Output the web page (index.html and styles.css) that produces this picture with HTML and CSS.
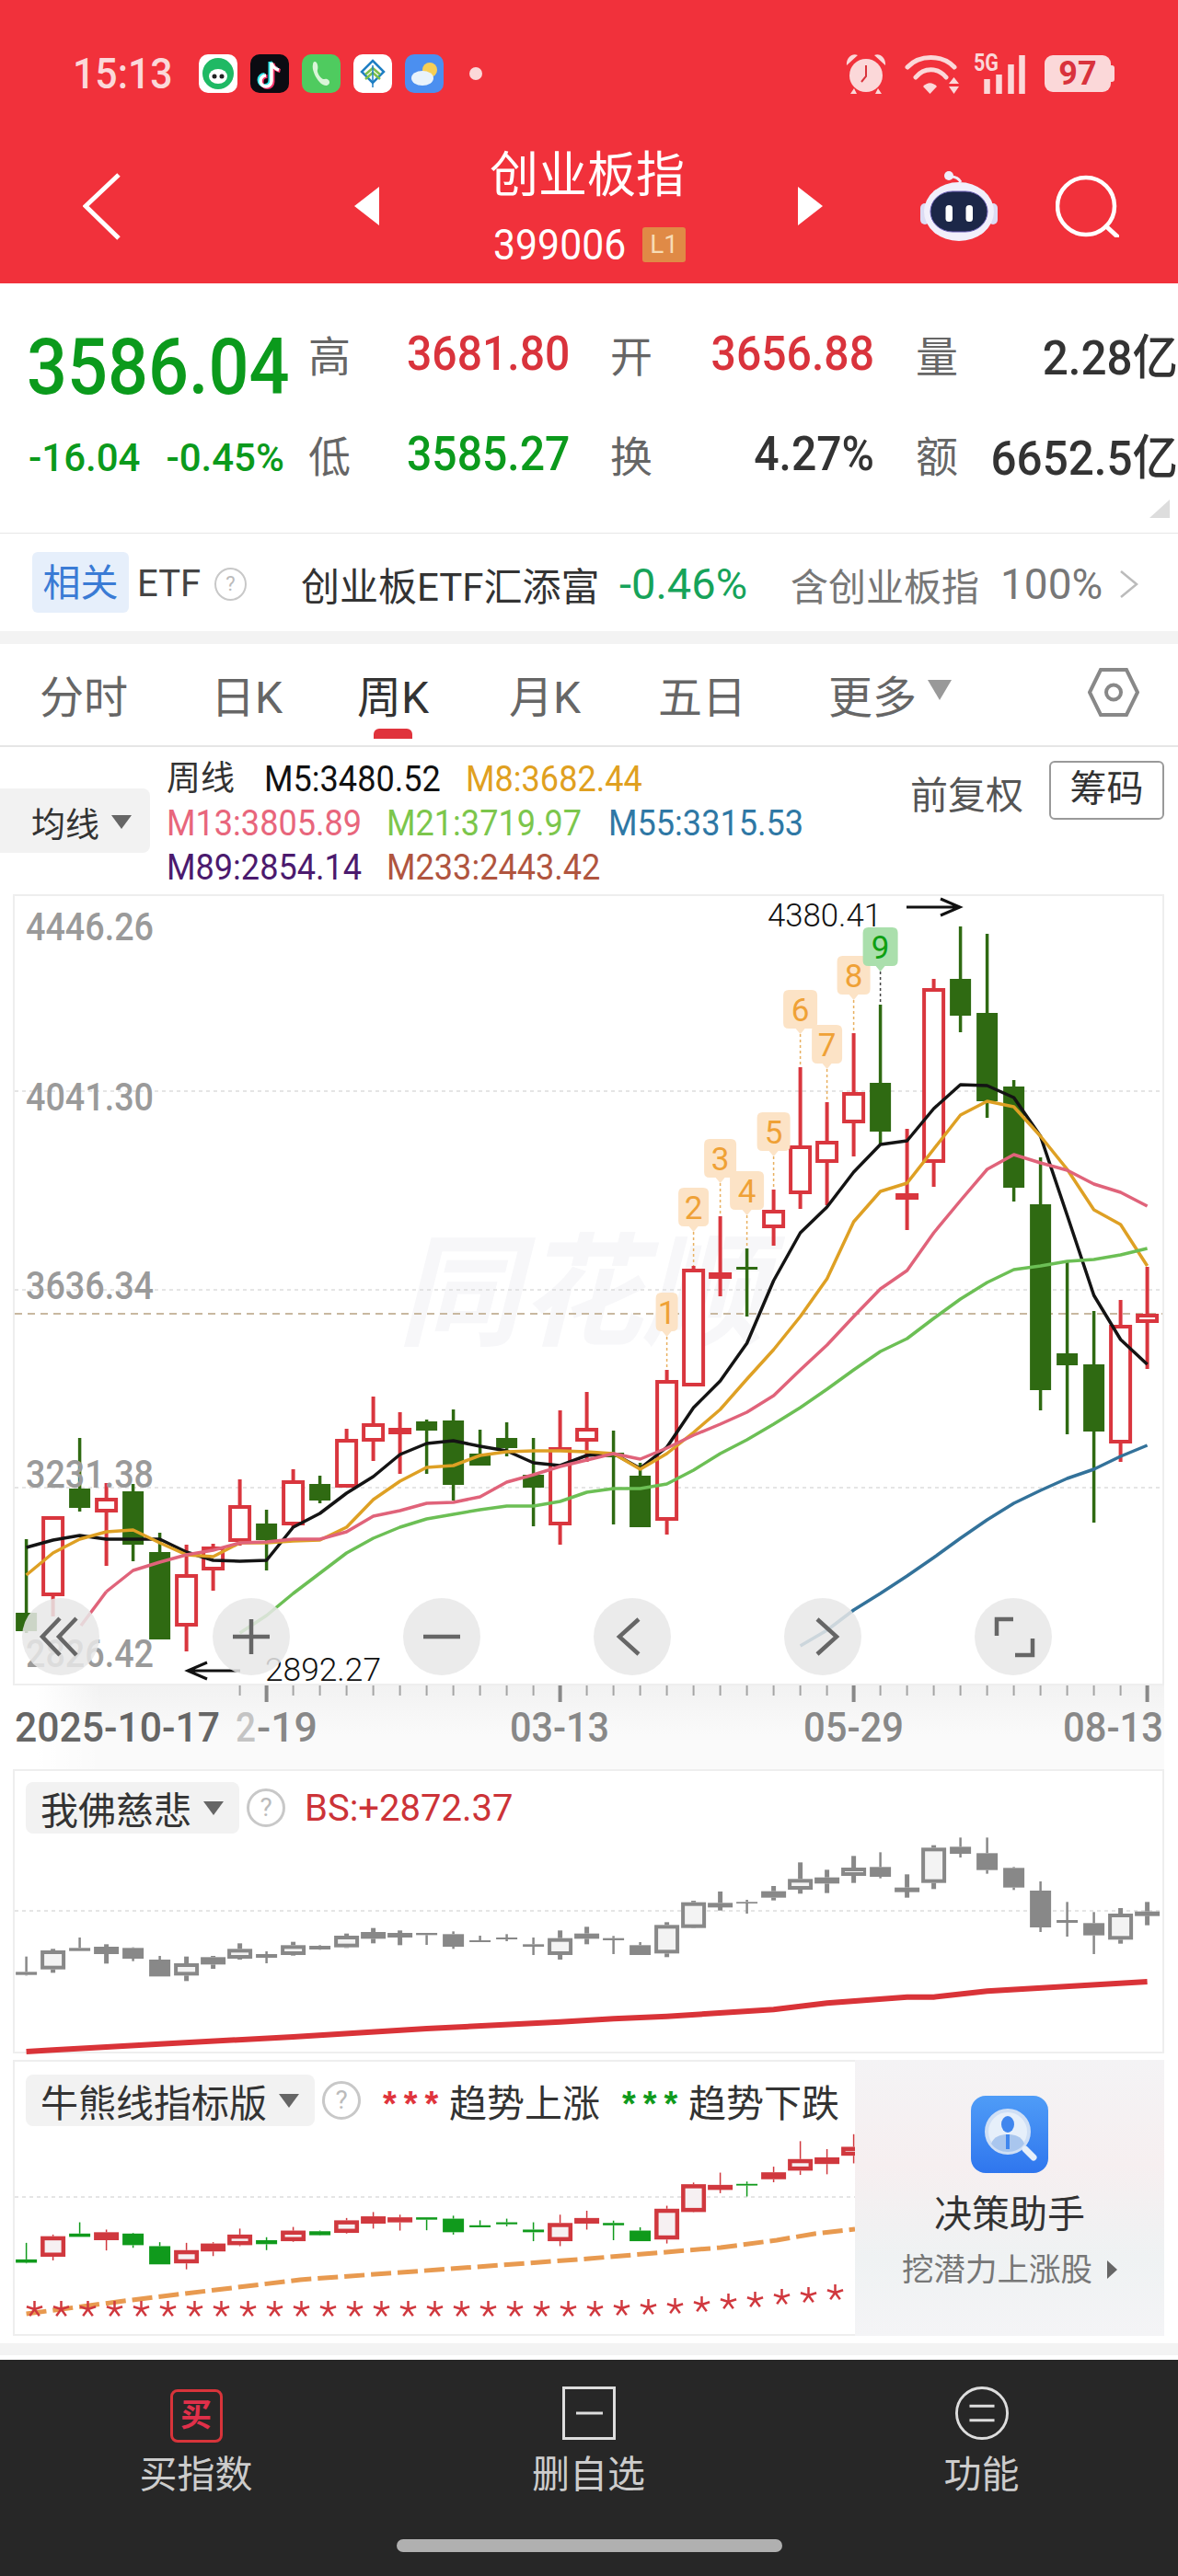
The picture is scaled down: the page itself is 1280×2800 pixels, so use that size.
FILE: index.html
```html
<!DOCTYPE html>
<html lang="zh-CN">
<head>
    <meta charset="UTF-8">
    <meta name="viewport" content="width=device-width, initial-scale=1.0">
    <title>创业板指</title>
    <link rel="stylesheet" href="styles.css">
</head>
<body>

<header class="header">
    <div class="statusbar">
        <span class="time">15:13</span>
        <div class="app-icons">
            <svg class="app" viewBox="0 0 42 42"><rect width="42" height="42" rx="10" fill="#fff"/><circle cx="21" cy="21" r="17" fill="#1fb964"/><ellipse cx="21" cy="24" rx="10" ry="8" fill="#fff"/><circle cx="17" cy="24" r="2.5" fill="#222"/><circle cx="25" cy="24" r="2.5" fill="#222"/></svg>
            <svg class="app" viewBox="0 0 42 42"><rect width="42" height="42" rx="10" fill="#0b0b12"/><path d="M23 9v20a6 6 0 1 1-6-6M23 9c1 5 4 7 8 8" fill="none" stroke="#2fe6ea" stroke-width="4" transform="translate(-1.5 -1)"/><path d="M23 9v20a6 6 0 1 1-6-6M23 9c1 5 4 7 8 8" fill="none" stroke="#f5316a" stroke-width="4" transform="translate(1.5 1)"/><path d="M23 9v20a6 6 0 1 1-6-6M23 9c1 5 4 7 8 8" fill="none" stroke="#fff" stroke-width="3.5"/></svg>
            <svg class="app" viewBox="0 0 42 42"><rect width="42" height="42" rx="10" fill="#4fcb5f"/><path d="M14 8c3 0 4 6 3 9-1 2 3 9 6 10 2 0 4-1 6 1 2 2 1 5-2 6-8 1-17-16-15-23 0-2 1-3 2-3z" fill="#d9f5d8"/></svg>
            <svg class="app" viewBox="0 0 42 42"><rect width="42" height="42" rx="10" fill="#fff"/><path d="M21 7 33 19 21 31 9 19z" fill="none" stroke="#1f7fc4" stroke-width="2.5"/><path d="M13 22 21 15 29 22M13 27 21 20 29 27" fill="none" stroke="#7cc04a" stroke-width="2.5"/><path d="M21 12v24" stroke="#1f7fc4" stroke-width="1.5"/></svg>
            <svg class="app" viewBox="0 0 42 42"><rect width="42" height="42" rx="10" fill="#4b8ff0"/><circle cx="27" cy="17" r="8" fill="#f7cf56"/><ellipse cx="19" cy="26" rx="12" ry="8" fill="#e9f3fb"/></svg>
        </div>
        <span class="status-dot"></span>
        <div class="status-right">
            <svg class="ic-alarm" viewBox="0 0 44 44"><circle cx="22" cy="24" r="18" fill="#fbd8d9"/><path d="M1 13C0 5 7-1 13 2zM43 13C44 5 37-1 31 2z" fill="#fbd8d9"/><path d="M9 38 5 44h7M35 38l4 6h-7" fill="#fbd8d9"/><path d="M22 13v12l-5 6" fill="none" stroke="#d9333c" stroke-width="2"/></svg>
            <svg class="ic-wifi" viewBox="0 0 60 43"><path d="M3 14C16 0 41 0 54 14M12 25C21 14 36 14 45 25" fill="none" stroke="#fbd8d9" stroke-width="5" stroke-linecap="round"/><path d="M20 35c5-5 10-5 15 0l-7.500 8z" fill="#fbd8d9"/><path d="M48 32l5.500-7 5.500 7zM48 35l5.500 8 5.500-8z" fill="#fbd8d9"/></svg>
            <svg class="ic-signal" viewBox="0 0 56 43"><text class="five-g" x="0" y="18" textLength="27" lengthAdjust="spacingAndGlyphs">5G</text><path d="M14.500 27v16M27.500 22v21M40.500 11v32M52.500 1v42" stroke="#fbd8d9" stroke-width="6.500"/></svg>
            <span class="battery">97</span>
        </div>
    </div>
    <nav class="nav">
        <svg class="ic-back" viewBox="0 0 41 73"><path d="M39 2 3 36l36 35" fill="none" stroke="#fff" stroke-width="5"/></svg>
        <span class="tri-left"></span>
        <div class="title-block">
            <div class="title">创业板指</div>
            <div class="code"><span class="code-num">399006</span><span class="level">L1</span></div>
        </div>
        <span class="tri-right"></span>
        <svg class="ic-robot" viewBox="0 0 84 76"><path d="M33 6q8 0 11 6" fill="none" stroke="#f0eefb" stroke-width="3"/><circle cx="31" cy="5" r="5" fill="#f0eefb"/><rect x="0" y="35" width="10" height="23" rx="5" fill="#dcdcf4"/><rect x="74" y="35" width="10" height="23" rx="5" fill="#dcdcf4"/><ellipse cx="42" cy="44" rx="38" ry="32" fill="#f1effb"/><rect x="11" y="22" width="62" height="44" rx="24" fill="#1c2748" stroke="#6a5fb5" stroke-width="1"/><rect x="27.500" y="37" width="7.500" height="18" rx="3.500" fill="#fff"/><rect x="49.500" y="37" width="7.500" height="18" rx="3.500" fill="#fff"/></svg>
        <svg class="ic-search" viewBox="0 0 69 68"><circle cx="33" cy="34" r="31" fill="none" stroke="#fff" stroke-width="4.500"/><path d="M55 56l12 11" stroke="#fff" stroke-width="5" stroke-linecap="round"/></svg>
    </nav>
</header>

<section class="quote">
    <div class="quote-grid">
        <div class="price"><span class="price-num">3586.04</span></div>
        <div class="q-label">高</div>
        <div class="q-val red">3681.80</div>
        <div class="q-label">开</div>
        <div class="q-val red right mid">3656.88</div>
        <div class="q-label end">量</div>
        <div class="q-val dark right last">2.28亿</div>

        <div class="change"><span>-16.04</span><span>-0.45%</span></div>
        <div class="q-label">低</div>
        <div class="q-val green">3585.27</div>
        <div class="q-label">换</div>
        <div class="q-val dark right mid">4.27%</div>
        <div class="q-label end">额</div>
        <div class="q-val dark right last">6652.5亿</div>
    </div>
    <span class="corner"></span>
</section>

<section class="etf">
    <span class="etf-tag">相关</span>
    <span class="etf-name">ETF</span>
    <span class="help help-sm">?</span>
    <span class="etf-fund">创业板ETF汇添富</span>
    <span class="etf-chg">-0.46%</span>
    <span class="etf-hold">含创业板指</span>
    <span class="etf-pct">100%</span>
    <svg class="etf-arrow" viewBox="0 0 21 30"><path d="M2 1l17 14L2 29" fill="none" stroke="#bbb" stroke-width="2.5"/></svg>
</section>

<div class="band"></div>

<section class="tabs">
    <span class="tab">分时</span>
    <span class="tab">日K</span>
    <span class="tab active">周K</span>
    <span class="tab">月K</span>
    <span class="tab">五日</span>
    <span class="tab">更多<i class="tab-tri"></i></span>
    <svg class="ic-hex" viewBox="0 0 56 53"><path d="M14 2h28l12 24.500L42 51H14L2 26.500z" fill="none" stroke="#888" stroke-width="4"/><circle cx="28" cy="26.500" r="8" fill="none" stroke="#888" stroke-width="4"/></svg>
</section>

<section class="legend">
    <div class="ma-select">均线<i class="select-tri"></i></div>
    <div class="ma-lines">
        <div class="ma-row first"><span class="ma-title">周线</span><span class="c-m5">M5:3480.52</span><span class="c-m8">M8:3682.44</span></div>
        <div class="ma-row"><span class="c-m13">M13:3805.89</span><span class="c-m21">M21:3719.97</span><span class="c-m55">M55:3315.53</span></div>
        <div class="ma-row"><span class="c-m89">M89:2854.14</span><span class="c-m233">M233:2443.42</span></div>
    </div>
    <div class="adjust">前复权</div>
    <div class="chip-btn">筹码</div>
</section>

<section class="kline">
    <svg id="kline-chart" class="chart-svg" width="1247" height="856" viewBox="16 974 1247 856"></svg>
    <div class="chart-btns">
        <span class="round-btn"><svg viewBox="0 0 84 84"><path d="M41 22 22 42l19 20M59 22 40 42l19 20"/></svg></span>
        <span class="round-btn"><svg viewBox="0 0 84 84"><path d="M22 42h40M42 23v38"/></svg></span>
        <span class="round-btn"><svg viewBox="0 0 84 84"><path d="M22 42h40"/></svg></span>
        <span class="round-btn"><svg viewBox="0 0 84 84"><path d="M49 23 28 42l21 19"/></svg></span>
        <span class="round-btn"><svg viewBox="0 0 84 84"><path d="M36 23l21 19-21 19"/></svg></span>
        <span class="round-btn"><svg viewBox="0 0 84 84"><path d="M42 23H24v18M44 62h19V44"/></svg></span>
    </div>
</section>

<section class="axis">
    <svg id="axis-chart" class="axis-svg" width="1280" height="91" viewBox="0 1832 1280 91"></svg>
</section>

<section class="panel panel-bs">
    <svg id="bs-chart" class="chart-svg" width="1247" height="305" viewBox="16 1925 1247 305"></svg>
    <div class="panel-head">
        <div class="ind-select">我佛慈悲<i class="select-tri"></i></div>
        <span class="help">?</span>
        <span class="bs-val">BS:+2872.37</span>
    </div>
</section>

<section class="panel panel-bull">
    <div class="bull-main">
        <svg id="bull-chart" class="chart-svg" width="913" height="296" viewBox="16 2241 913 296"></svg>
        <div class="panel-head">
            <div class="ind-select">牛熊线指标版<i class="select-tri"></i></div>
            <span class="help">?</span>
            <span class="stars red-star">***</span><span class="trend">趋势上涨</span>
            <span class="stars green-star">***</span><span class="trend">趋势下跌</span>
        </div>
    </div>
    <aside class="helper">
        <svg class="helper-icon" viewBox="0 0 84 84">
            <defs><linearGradient id="helperBg" x1="0" y1="0" x2="0" y2="1"><stop offset="0" stop-color="#4f9cf7"/><stop offset="1" stop-color="#2f76ee"/></linearGradient></defs>
            <rect width="84" height="84" rx="16" fill="url(#helperBg)"/>
            <circle cx="40" cy="39" r="23" fill="#e6effa" stroke="#cfdff5" stroke-width="4"/>
            <path d="M22 52c3-8 11-10 18-10s15 2 18 10c-4 6-11 9-18 9s-14-3-18-9z" fill="#a9c6ee"/>
            <ellipse cx="40" cy="31" rx="7" ry="9" fill="#3f86ee"/>
            <path d="M38 42h4v16h-4z" fill="#3f86ee"/>
            <path d="M59 58l9 9" stroke="#e6effa" stroke-width="7" stroke-linecap="round"/>
        </svg>
        <div class="helper-title">决策助手</div>
        <div class="helper-sub">挖潜力上涨股<i class="helper-tri"></i></div>
    </aside>
</section>

<div class="foot-gap"></div>

<footer class="bottom">
    <div class="bottom-tabs">
        <div class="bottom-item">
            <span class="buy-icon">买</span>
            <span class="bottom-text">买指数</span>
        </div>
        <div class="bottom-item">
            <svg class="bottom-icon" viewBox="0 0 58 58"><rect x="1.500" y="1.500" width="55" height="55" fill="none" stroke="#ddd" stroke-width="3"/><path d="M15 29h29" stroke="#ddd" stroke-width="3"/></svg>
            <span class="bottom-text">删自选</span>
        </div>
        <div class="bottom-item">
            <svg class="bottom-icon" viewBox="0 0 60 60"><circle cx="30" cy="30" r="28.500" fill="none" stroke="#ddd" stroke-width="3"/><path d="M16 22h28M16 38h28" stroke="#ddd" stroke-width="3"/></svg>
            <span class="bottom-text">功能</span>
        </div>
    </div>
    <div class="home-bar"></div>
</footer>

<script src="chart.js"></script>
</body>
</html>
```

FILE: styles.css
```css
* {
    box-sizing: border-box;
}

body {
    margin: 0;
    width: 1280px;
    height: 2800px;
    overflow: hidden;
    background: #fff;
    color: #333;
    font-family: Roboto, "Noto Sans CJK SC", sans-serif;
}

/* red header */
.header {
    height: 308px;
    background-color: #f1313b;
}

.statusbar {
    display: flex;
    align-items: center;
    height: 160px;
    padding: 0 69px 0 79px;
}

.time {
    width: 107px;
    font-size: 46px;
    font-weight: 500;
    color: #fbd8d9;
    white-space: nowrap;
    transform: scaleX(0.93);
    transform-origin: left;
}

.app-icons {
    display: flex;
    gap: 14px;
    margin-left: 30px;
}

.app {
    width: 42px;
    height: 42px;
}

.status-dot {
    width: 14px;
    height: 14px;
    margin-left: 28px;
    border-radius: 50%;
    background: #fbd8d9;
}

.status-right {
    display: flex;
    align-items: center;
    margin-left: auto;
}

.ic-alarm {
    width: 44px;
    height: 44px;
}

.ic-wifi {
    width: 60px;
    height: 43px;
    margin-left: 20px;
}

.ic-signal {
    width: 56px;
    height: 43px;
    margin-left: 15px;
    overflow: visible;
}

.five-g {
    font-size: 25px;
    font-weight: 700;
    fill: #fbd8d9;
}

.battery {
    position: relative;
    width: 72px;
    height: 40px;
    margin: 0 4px 0 21px;
    border-radius: 9px;
    background: #fbd8d9;
    color: #d9333c;
    font-size: 36px;
    font-weight: 700;
    line-height: 40px;
    text-align: center;
}

.battery::after {
    content: "";
    position: absolute;
    left: 72px;
    top: 11px;
    width: 4px;
    height: 18px;
    border-radius: 0 3px 3px 0;
    background: #fbd8d9;
}

.nav {
    display: flex;
    align-items: center;
    height: 128px;
    padding-left: 90px;
    color: #fff;
}

.ic-back {
    width: 41px;
    height: 73px;
}

.tri-left, .tri-right {
    width: 0;
    height: 0;
    border-top: 21px solid transparent;
    border-bottom: 21px solid transparent;
}

.tri-left {
    margin-left: 254px;
    border-right: 27px solid #fff;
}

.tri-right {
    margin-left: 122px;
    border-left: 27px solid #fff;
}

.title-block {
    width: 213px;
    margin-left: 120px;
}

.title {
    font-size: 53px;
    line-height: 62px;
    white-space: nowrap;
}

.code {
    display: flex;
    align-items: center;
    gap: 7px;
    margin-top: 22px;
    height: 44px;
    padding-left: 4px;
    font-size: 46px;
}

.code-num {
    transform: scaleX(0.93);
    transform-origin: left;
}

.level {
    width: 47px;
    height: 38px;
    border-radius: 3px;
    background: #e08a46;
    color: #f7dcb5;
    font-size: 28px;
    line-height: 38px;
    text-align: center;
}

.ic-robot {
    width: 84px;
    height: 76px;
    margin-left: 106px;
}

.ic-search {
    width: 69px;
    height: 68px;
    margin-left: 63px;
}

/* price block */
.quote {
    position: relative;
    height: 272px;
    padding: 46px 0 0 31px;
    border-bottom: 1px solid #e6e6e6;
}

.quote-grid {
    display: grid;
    grid-template-columns: 304px 107px 221px 110px 174px 94px 235px;
    grid-auto-rows: 60px;
    row-gap: 49px;
    align-items: center;
}

.price {
    margin-top: 32px;
}

.price-num {
    display: inline-block;
    margin-left: -2px;
    font-size: 86px;
    font-weight: 500;
    line-height: 60px;
    color: #0b9a1c;
    transform: scaleX(0.9);
    transform-origin: left;
}

.change {
    display: flex;
    gap: 28px;
    margin-top: 8px;
    font-size: 42px;
    font-weight: 500;
    color: #0b9a1c;
    white-space: nowrap;
}

.q-label {
    font-size: 46px;
    color: #666;
}

.q-label.end {
    text-align: right;
}

.q-val {
    font-size: 52px;
    font-weight: 500;
    white-space: nowrap;
    transform: scaleX(0.925);
    transform-origin: left;
}

.q-val.right {
    display: flex;
    justify-content: flex-end;
    transform: scaleX(0.95);
    transform-origin: right;
}

.q-val.mid {
    margin-right: -3px;
    transform: scaleX(0.925);
}

.q-val.last {
    margin-right: -4px;
}

.red {
    color: #d9333c;
}

.green {
    color: #0b9a1c;
}

.dark {
    color: #333;
}

.corner {
    position: absolute;
    right: 9px;
    bottom: 16px;
    width: 0;
    height: 0;
    border-bottom: 20px solid #ddd;
    border-left: 22px solid transparent;
}

/* related ETF row */
.etf {
    display: flex;
    align-items: center;
    height: 106px;
    padding: 3px 0 0 35px;
    font-size: 42px;
    white-space: nowrap;
}

.etf-tag {
    width: 105px;
    height: 66px;
    margin-top: -3px;
    border-radius: 6px;
    background: #e6effb;
    color: #3a7bd5;
    font-size: 41px;
    line-height: 68px;
    text-align: center;
}

.etf-name {
    width: 84px;
    margin-left: 9px;
    color: #444;
    font-size: 40px;
}

.help {
    display: block;
    width: 42px;
    height: 42px;
    border: 3px solid #c8c8c8;
    border-radius: 50%;
    color: #bbb;
    font-size: 28px;
    line-height: 36px;
    text-align: center;
}

.help-sm {
    width: 35px;
    height: 36px;
    border-width: 2px;
    font-size: 22px;
    line-height: 32px;
}

.etf-fund {
    width: 346px;
    margin-left: 59px;
    color: #333;
}

.etf-chg {
    width: 186px;
    color: #16a35a;
    font-size: 47px;
}

.etf-hold {
    width: 228px;
    color: #777;
    font-size: 41px;
}

.etf-pct {
    width: 129px;
    color: #777;
    font-size: 46px;
}

.etf-arrow {
    width: 21px;
    height: 30px;
}

.band {
    height: 14px;
    background: #f3f3f3;
}

/* period tabs */
.tabs {
    display: grid;
    grid-template-columns: 186px 159px 165px 162px 185px 280px 56px;
    align-items: center;
    height: 112px;
    padding: 0 0 2px 43px;
    border-bottom: 2px solid #e6e6e6;
    font-size: 48px;
    color: #666;
}

.tab {
    position: relative;
    display: flex;
    align-items: center;
    white-space: nowrap;
}

.tab.active {
    color: #333;
}

.tab.active::after {
    content: "";
    position: absolute;
    left: 18px;
    top: 73px;
    width: 42px;
    height: 11px;
    border-radius: 6px 6px 0 0;
    background: #e0333c;
}

.tab-tri {
    width: 0;
    height: 0;
    margin: 0 0 8px 12px;
    border-top: 22px solid #999;
    border-left: 13px solid transparent;
    border-right: 13px solid transparent;
}

.ic-hex {
    width: 56px;
    height: 53px;
    margin: -4px 0 0 2px;
}

/* moving average legend */
.legend {
    position: relative;
    height: 160px;
}

.ma-select {
    position: absolute;
    left: 0;
    top: 45px;
    display: flex;
    align-items: center;
    width: 163px;
    height: 70px;
    padding: 3px 0 0 34px;
    border-radius: 0 8px 8px 0;
    background: #f2f2f2;
    font-size: 37px;
    white-space: nowrap;
}

.select-tri {
    width: 0;
    height: 0;
    margin-left: 13px;
    border-top: 15px solid #666;
    border-left: 11px solid transparent;
    border-right: 11px solid transparent;
}

.ma-lines {
    position: absolute;
    left: 181px;
    top: 11px;
    font-size: 38px;
    line-height: 48px;
    white-space: nowrap;
}

.ma-row {
    display: grid;
    grid-template-columns: 239px 241px auto;
}

.ma-row.first {
    grid-template-columns: 106px 219px auto;
}

.ma-row span {
    transform: scaleX(0.95);
    transform-origin: left;
}

.ma-row .ma-title {
    color: #333;
    transform: none;
    font-size: 37px;
}

.c-m5 { color: #111; }
.c-m8 { color: #e0a020; }
.c-m13 { color: #e8667c; }
.c-m21 { color: #7cc64c; }
.c-m55 { color: #2f78a5; }
.c-m89 { color: #4b1a6e; }
.c-m233 { color: #b0553f; }

.adjust {
    position: absolute;
    left: 989px;
    top: 24px;
    font-size: 41px;
    line-height: 58px;
    color: #555;
}

.chip-btn {
    position: absolute;
    left: 1140px;
    top: 15px;
    width: 125px;
    height: 64px;
    border: 2px solid #999;
    border-radius: 6px;
    font-size: 40px;
    line-height: 58px;
    text-align: center;
}

/* candle chart frame */
.kline, .panel {
    position: relative;
    width: 1251px;
    margin-left: 14px;
    border: 2px solid #eee;
}

.kline {
    height: 860px;
}

.chart-svg {
    position: absolute;
    left: 0;
    top: 0;
    overflow: visible;
}

.chart-btns {
    position: absolute;
    left: 8px;
    top: 763px;
    display: flex;
    gap: 123px;
}

.round-btn {
    width: 84px;
    height: 84px;
    border-radius: 50%;
    background: rgba(232, 232, 232, 0.85);
}

.round-btn svg {
    display: block;
    width: 84px;
    height: 84px;
    fill: none;
    stroke: #666;
    stroke-width: 4.5;
}

.grid-line {
    stroke: #ddd;
    stroke-width: 1.5;
    stroke-dasharray: 4 4;
}

.close-line {
    stroke: #c8b8a0;
    stroke-width: 2;
    stroke-dasharray: 8 6;
}

.wm {
    fill: #f7f7f9;
    font-size: 133px;
    font-weight: 700;
    font-style: italic;
}

.y-label {
    fill: #9a9a9a;
    font-size: 42px;
    font-weight: 500;
}

.peak-label {
    fill: #111;
    font-size: 35px;
    font-weight: 300;
}

.arrow {
    fill: none;
    stroke: #111;
    stroke-width: 3;
}

.c-red { fill: #fff; stroke: #d9363e; }
.c-green { fill: #2f6a12; stroke: #2f6a12; }
.w-red { stroke: #d9363e; stroke-width: 4; }
.w-green { stroke: #2f6a12; stroke-width: 3.5; }

.c-grey-up { fill: #f3f3f3; stroke: #888; }
.c-grey-down { fill: #888; stroke: #888; }
.w-grey-up { stroke: #888; stroke-width: 5; }
.w-grey-down { stroke: #888; stroke-width: 2.5; }

.c-bull-up { fill: #f6f0f2; stroke: #d0383e; }
.c-bull-down { fill: #109a1c; stroke: #109a1c; }
.w-bull-up { stroke: #d0383e; stroke-width: 1.5; }
.w-bull-down { stroke: #109a1c; stroke-width: 1.5; }

.ma {
    fill: none;
    stroke-width: 3.5;
    stroke-linejoin: round;
}

.ma-m5 { stroke: #141414; }
.ma-m8 { stroke: #dea024; }
.ma-m13 { stroke: #e0637a; }
.ma-m21 { stroke: #6cbf55; }
.ma-m55 { stroke: #33729a; }

.td-badge { fill: #fce3c6; }
.td-num {
    fill: #efa136;
    font-size: 35px;
    text-anchor: middle;
}
.td-stem {
    stroke: #e8b060;
    stroke-width: 1.5;
    stroke-dasharray: 3 3;
}
.td-badge.td-top { fill: #aadfac; }
.td-num.td-top { fill: #0fa012; }
.td-stem.td-top { stroke: #444; }

.bs-line {
    fill: none;
    stroke: #d93338;
    stroke-width: 6;
}

.bull-line {
    fill: none;
    stroke: #e89a50;
    stroke-width: 5;
    stroke-dasharray: 22 7;
}

.star {
    stroke: #d0383e;
    stroke-width: 2.5;
}

/* date axis */
.axis {
    height: 91px;
    background:
        linear-gradient(to right, #fff 40px, rgba(255, 255, 255, 0) 110px),
        linear-gradient(to right, rgba(255, 255, 255, 0) 1265px, #fff 1265px),
        linear-gradient(#f2f2f2, #fafafa 60%);
}

.axis-svg {
    display: block;
}

.tick {
    stroke: #a5a5a5;
    stroke-width: 2;
}

.tick.major {
    stroke: #888;
    stroke-width: 4;
}

.date-label {
    fill: #888;
    font-size: 44px;
    font-weight: 500;
}

.date-label.first {
    fill: #666;
}

.date-fade {
    fill: #c4c4c4;
}

/* indicator panels */
.panel-bs {
    height: 309px;
}

.panel-bull {
    display: flex;
    height: 300px;
    margin-top: 7px;
}

.panel-head {
    position: relative;
    display: flex;
    align-items: center;
    padding: 12px 0 0 12px;
    white-space: nowrap;
}

.ind-select {
    display: flex;
    align-items: center;
    height: 56px;
    padding: 0 17px 0 16px;
    border-radius: 8px;
    background: #f2f2f2;
    font-size: 41px;
}

.panel-head .help {
    margin-left: 8px;
}

.bs-val {
    margin-left: 21px;
    color: #cc3338;
    font-size: 40px;
}

.stars {
    width: 61px;
    margin: 8px 0 0 24px;
    font-family: "Liberation Sans", sans-serif;
    font-size: 38px;
    font-weight: 700;
    letter-spacing: 8px;
    line-height: 40px;
}

.red-star {
    color: #e0343c;
}

.green-star {
    color: #109a1c;
}

.trend {
    margin-left: 11px;
    font-size: 41px;
}

.bull-main {
    position: relative;
    width: 913px;
    overflow: hidden;
}

.helper {
    display: flex;
    flex-direction: column;
    align-items: center;
    width: 336px;
    margin: -2px -2px -2px 0;
    padding-top: 39px;
    background: linear-gradient(#f4f3f5, #f6eff0 38%, #eff2f3 72%, #f4f4f6);
}

.helper-icon {
    width: 84px;
    height: 84px;
}

.helper-title {
    margin-top: 20px;
    font-size: 41px;
    line-height: 50px;
    color: #333;
}

.helper-sub {
    display: flex;
    align-items: center;
    margin-top: 12px;
    font-size: 34.500px;
    line-height: 46px;
    color: #777;
    white-space: nowrap;
}

.helper-tri {
    width: 0;
    height: 0;
    margin-left: 16px;
    border-top: 10px solid transparent;
    border-bottom: 10px solid transparent;
    border-left: 11px solid #666;
}

.foot-gap {
    height: 18px;
    margin-top: 8px;
    border-bottom: 5px solid #fff;
    background: #f3f3f3;
}

/* bottom toolbar */
.bottom {
    height: 235px;
    background-color: #272727;
    color: #ccc;
}

.bottom-tabs {
    display: grid;
    grid-template-columns: 426px 427px 427px;
    padding-top: 29px;
}

.bottom-item {
    display: flex;
    flex-direction: column;
    align-items: center;
    justify-content: space-between;
    height: 120px;
}

.buy-icon {
    width: 57px;
    height: 58px;
    margin-top: 3px;
    border: 3px solid #d8343a;
    border-radius: 8px;
    color: #e0304a;
    font-size: 34px;
    font-weight: 700;
    line-height: 50px;
    text-align: center;
}

.bottom-icon {
    width: 58px;
    height: 58px;
}

.bottom-text {
    font-size: 41px;
    line-height: 48px;
    white-space: nowrap;
}

.home-bar {
    width: 419px;
    height: 14px;
    margin: 46px auto 0;
    border-radius: 7px;
    background: #b0b0b0;
}
```

FILE: chart.js
```js
// Weekly candles, read off in page coordinates: [wick top, wick bottom, body top, body bottom]
const candles = [
    [1673, 1775, 1753, 1773], [1648, 1757, 1648, 1735], [1563, 1643, 1618, 1639], [1612, 1702, 1628, 1644],
    [1613, 1697, 1621, 1679], [1666, 1782, 1687, 1782], [1679, 1795, 1711, 1768], [1678, 1729, 1681, 1707],
    [1608, 1680, 1636, 1676], [1641, 1707, 1656, 1674], [1597, 1660, 1609, 1658], [1604, 1634, 1613, 1631],
    [1553, 1617, 1564, 1617], [1518, 1588, 1547, 1567], [1535, 1602, 1552, 1559], [1543, 1602, 1545, 1555],
    [1532, 1631, 1544, 1614], [1554, 1593, 1580, 1593], [1546, 1583, 1563, 1574], [1563, 1659, 1603, 1617],
    [1533, 1679, 1573, 1658], [1513, 1589, 1552, 1567], [1555, 1657, 1579, 1584], [1590, 1660, 1604, 1660],
    [1489, 1668, 1500, 1653], [1376, 1507, 1379, 1507], [1322, 1409, 1383, 1390], [1357, 1431, 1377, 1380],
    [1293, 1354, 1315, 1335], [1160, 1314, 1245, 1298], [1198, 1310, 1240, 1264], [1123, 1257, 1187, 1221],
    [1092, 1244, 1177, 1230], [1227, 1337, 1297, 1304], [1064, 1290, 1074, 1264], [1007, 1122, 1064, 1104],
    [1015, 1215, 1101, 1197], [1174, 1306, 1181, 1291], [1258, 1533, 1309, 1511], [1371, 1559, 1471, 1484],
    [1425, 1655, 1483, 1556], [1413, 1589, 1440, 1569], [1377, 1488, 1428, 1438]
];

// Which weeks closed up (drawn hollow)
const ups = [1, 3, 6, 7, 8, 10, 12, 13, 14, 20, 21, 24, 25, 26, 28, 29, 30, 31, 33, 34, 41, 42];

// Moving averages, one y per candle, starting at the given candle index
const averages = [
    { name: 'm5', start: 0, ys: [1682, 1674, 1669, 1673, 1673, 1673, 1687, 1696, 1697, 1696, 1660, 1645, 1623, 1605, 1581, 1569, 1566, 1572, 1577, 1590, 1593, 1582, 1580, 1596, 1573, 1530, 1501, 1460, 1392, 1340, 1312, 1274, 1244, 1240, 1205, 1179, 1180, 1193, 1235, 1321, 1408, 1456, 1483] },
    { name: 'm8', start: 0, ys: [1712, 1688, 1673, 1665, 1663, 1677, 1690, 1692, 1677, 1677, 1675, 1674, 1660, 1630, 1610, 1595, 1593, 1582, 1578, 1577, 1577, 1578, 1580, 1597, 1580, 1557, 1532, 1499, 1467, 1431, 1390, 1328, 1295, 1286, 1249, 1212, 1197, 1203, 1235, 1271, 1315, 1331, 1376] },
    { name: 'm13', start: 3, ys: [1730, 1707, 1698, 1690, 1685, 1677, 1676, 1673, 1673, 1665, 1648, 1642, 1634, 1633, 1627, 1611, 1603, 1594, 1587, 1580, 1586, 1574, 1560, 1548, 1535, 1517, 1489, 1462, 1431, 1401, 1381, 1340, 1305, 1271, 1255, 1264, 1272, 1287, 1296, 1311] },
    { name: 'm21', start: 8, ys: [1775, 1756, 1732, 1710, 1688, 1672, 1660, 1651, 1646, 1641, 1637, 1637, 1632, 1622, 1618, 1618, 1613, 1598, 1580, 1565, 1548, 1530, 1510, 1489, 1469, 1455, 1433, 1412, 1394, 1380, 1376, 1371, 1369, 1364, 1357] },
    { name: 'm55', start: 29, ys: [1789, 1772, 1750, 1732, 1713, 1693, 1672, 1652, 1634, 1620, 1607, 1597, 1583, 1571] }
];

// TD sequence badges above the candles
const tdBadges = [
    { n: 1, i: 24, top: 1405, w: 24 }, { n: 2, i: 25, top: 1291, w: 33 }, { n: 3, i: 26, top: 1238, w: 35 },
    { n: 4, i: 27, top: 1273, w: 37 }, { n: 5, i: 28, top: 1209, w: 36 }, { n: 6, i: 29, top: 1076, w: 37 },
    { n: 7, i: 30, top: 1114, w: 33 }, { n: 8, i: 31, top: 1039, w: 36 }, { n: 9, i: 32, top: 1008, w: 38 }
];

// Same candles in the lower panels, in zoomed units: [wick top, wick bottom, body top, body bottom]
const lower = [
    [680, 742, 730, 740], [655, 733, 660, 722], [618, 660, 652, 662], [640, 703, 648, 672], [650, 695, 652, 687],
    [678, 745, 690, 745], [680, 760, 702, 742], [678, 720, 682, 706], [637, 690, 655, 687], [663, 702, 672, 684],
    [632, 677, 643, 675], [643, 658, 645, 657], [605, 652, 612, 650], [587, 637, 600, 622], [595, 643, 603, 618],
    [603, 642, 603, 610], [598, 655, 607, 648], [612, 633, 627, 633], [607, 630, 618, 624], [618, 675, 640, 648],
    [595, 690, 620, 675], [583, 640, 605, 622], [613, 672, 620, 627], [633, 675, 643, 675], [568, 682, 577, 670],
    [498, 588, 503, 587], [468, 530, 505, 517], [495, 540, 502, 507], [450, 497, 467, 488], [373, 475, 427, 462],
    [397, 473, 422, 442], [352, 440, 390, 417], [340, 425, 388, 420], [412, 488, 455, 467], [317, 460, 325, 440],
    [292, 357, 322, 345], [292, 410, 343, 398], [388, 463, 391, 455], [435, 600, 465, 585], [502, 615, 561, 570],
    [535, 672, 571, 611], [522, 638, 540, 625], [502, 578, 533, 547]
];

const SVG_NS = 'http://www.w3.org/2000/svg';

function candleX(i) {
    return 28.6 + 29 * i;
}

function add(parent, tag, attrs, text) {
    const node = document.createElementNS(SVG_NS, tag);
    Object.keys(attrs).forEach(key => node.setAttribute(key, attrs[key]));
    if (text !== undefined) node.textContent = text;
    parent.appendChild(node);
    return node;
}

function line(parent, x1, y1, x2, y2, cls) {
    add(parent, 'line', { x1, y1, x2, y2, class: cls });
}

function label(parent, text, x, y, width, cls) {
    add(parent, 'text', { x, y, class: cls, textLength: width, lengthAdjust: 'spacingAndGlyphs' }, text);
}

// Draw one candle; style says which classes to use and how wide
function drawCandle(svg, i, c, style) {
    const x = candleX(i);
    const up = ups.includes(i);
    const wick = up ? style.upWick : style.downWick;
    if (c[0] < c[2]) line(svg, x, c[0], x, c[2], wick);
    if (c[1] > c[3]) line(svg, x, c[3], x, c[1], wick);
    if (up) {
        const sw = style.strokeWidth;
        const h = Math.max(c[3] - c[2] - sw, 1);
        add(svg, 'rect', { x: x - 12.5 - (style.extra || 0) + sw / 2, y: c[2] + sw / 2, width: 25 + 2 * (style.extra || 0) - sw, height: h, class: style.upBody, 'stroke-width': sw });
    } else {
        add(svg, 'rect', { x: x - 11.5, y: c[2], width: 23, height: Math.max(c[3] - c[2], 1), class: style.downBody, 'stroke-width': 0 });
    }
}

function drawKline() {
    const svg = document.getElementById('kline-chart');
    add(svg, 'text', { x: 432, y: 1452, class: 'wm' }, '同花顺');
    [1186, 1402, 1617].forEach(y => line(svg, 16, y, 1263, y, 'grid-line'));
    line(svg, 16, 1428, 1263, 1428, 'close-line');

    candles.forEach((c, i) => drawCandle(svg, i, c, {
        upWick: 'w-red', downWick: 'w-green', upBody: 'c-red', downBody: 'c-green', strokeWidth: 4
    }));

    averages.forEach(ma => {
        const points = ma.ys.map((y, k) => candleX(ma.start + k) + ',' + y).join(' ');
        add(svg, 'polyline', { points, class: 'ma ma-' + ma.name });
    });

    // the M13 line starts a little before its first full candle
    add(svg, 'polyline', { points: '88,1767 ' + candleX(3) + ',1730', class: 'ma ma-m13' });

    tdBadges.forEach(b => {
        const x = candleX(b.i);
        const extra = b.n === 9 ? ' td-top' : '';
        const bottom = b.top + 42;
        const stemEnd = candles[b.i][0];
        line(svg, x, bottom + 6, x, stemEnd, 'td-stem' + extra);
        const half = b.w / 2;
        const d = 'M' + (x - half + 6) + ' ' + b.top + 'H' + (x + half - 6) + 'q6 0 6 6V' + (bottom - 6) + 'q0 6-6 6H' + (x + 5) +
            'l-5 6-5-6H' + (x - half + 6) + 'q-6 0-6-6V' + (b.top + 6) + 'q0-6 6-6z';
        add(svg, 'path', { d, class: 'td-badge' + extra });
        add(svg, 'text', { x, y: b.top + 34, class: 'td-num' + extra }, b.n);
    });

    // Y axis prices
    [['4446.26', 1022], ['4041.30', 1207], ['3636.34', 1412], ['3231.38', 1617], ['2826.42', 1812]].forEach(row => {
        label(svg, row[0], 28, row[1], 139, 'y-label');
    });

    // High and low markers
    label(svg, '4380.41', 834, 1007, 124, 'peak-label');
    add(svg, 'path', { d: 'M985 986H1043M1022 977l21 9-21 9', class: 'arrow' });
    label(svg, '2892.27', 288, 1827, 126, 'peak-label');
    add(svg, 'path', { d: 'M261 1816H204M225 1807l-21 9 21 9', class: 'arrow' });
}

function drawAxis() {
    const svg = document.getElementById('axis-chart');
    for (let i = 8; i <= 42; i++) {
        const major = (i - 9) % 11 === 0;
        line(svg, candleX(i), 1832, candleX(i), major ? 1850 : 1843, major ? 'tick major' : 'tick');
    }
    label(svg, '2025-10-17', 16, 1893, 223, 'date-label first');
    label(svg, '2', 256, 1893, 22, 'date-label date-fade');
    label(svg, '-19', 279, 1893, 66, 'date-label');
    label(svg, '03-13', 554, 1893, 108, 'date-label');
    label(svg, '05-29', 873, 1893, 109, 'date-label');
    label(svg, '08-13', 1155, 1893, 109, 'date-label');
}

function drawBs() {
    const svg = document.getElementById('bs-chart');
    line(svg, 16, 2077, 1263, 2077, 'grid-line');
    lower.forEach((c, i) => {
        const yc = c.map(v => 1900 + v / 3);
        drawCandle(svg, i, yc, {
            upWick: 'w-grey-up', downWick: 'w-grey-down', upBody: 'c-grey-up', downBody: 'c-grey-down', strokeWidth: 4, extra: 1
        });
    });
    const trend = [[0, 990], [1, 985], [5, 965], [10, 942], [15, 915], [20, 893], [22, 883], [24, 875], [28, 853], [30, 832], [33, 812], [34, 812], [36, 793], [42, 762]];
    const points = trend.map(p => candleX(p[0]) + ',' + (1900 + p[1] / 3)).join(' ');
    add(svg, 'polyline', { points, class: 'bs-line' });
}

function drawBull() {
    const svg = document.getElementById('bull-chart');
    line(svg, 16, 2388, 929, 2388, 'grid-line');
    lower.forEach((c, i) => {
        const yc = c.map(v => 2220 + (632 + (v - 660) * 1.08) / 3);
        drawCandle(svg, i, yc, {
            upWick: 'w-bull-up', downWick: 'w-bull-down', upBody: 'c-bull-up', downBody: 'c-bull-down', strokeWidth: 4.5, extra: 1
        });
    });
    const dashed = [[28.6, 2515], [143, 2500], [326, 2478], [490, 2466], [640, 2455], [783, 2443], [844, 2435], [885, 2428], [929, 2423]];
    add(svg, 'polyline', { points: dashed.map(p => p.join(',')).join(' '), class: 'bull-line' });

    // Five-armed stars along the bottom, rising near the end
    const lift = [1, 2, 3, 5, 8, 10, 13, 15, 18];
    for (let k = 0; k <= 30; k++) {
        const x = 37.5 + 29 * k;
        const y = 2510 - (k < 22 ? 0 : lift[k - 22]);
        for (let a = 0; a < 5; a++) {
            const angle = (a * 72 - 90) * Math.PI / 180;
            line(svg, x, y, x + 9 * Math.cos(angle), y + 9 * Math.sin(angle), 'star');
        }
    }
}

drawKline();
drawAxis();
drawBs();
drawBull();
```
